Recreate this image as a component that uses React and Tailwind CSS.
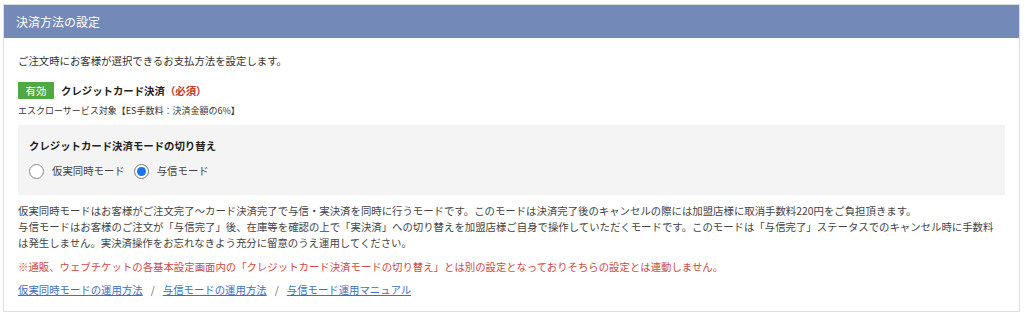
import { useState } from "react"

const FONT = { fontFamily: '"Noto Sans CJK JP", "Noto Sans", sans-serif' }

const Radio = ({ checked, label, onClick }) => (
  <label className="flex items-center cursor-pointer" onClick={onClick}>
    <span
      className={`w-[15px] h-[15px] rounded-full border bg-white flex items-center justify-center ${
        checked ? "border-[#767676]" : "border-[#8a8a8a]"
      }`}
    >
      {checked && <span className="w-[9px] h-[9px] rounded-full bg-[#1a73e8]" />}
    </span>
    <span className="ml-[8px] text-[10.4px] text-[#444]">{label}</span>
  </label>
)

const App = () => {
  const [mode, setMode] = useState("yoshin")

  return (
    <div className="pt-[4px] pl-[3px] pr-[4px]" style={FONT}>
      <div className="border border-[#dedede] bg-white h-[308px]">
        <div className="bg-[#7389b7] h-[33px] flex items-center px-[12px]">
          <h1 className="text-white text-[12px]">決済方法の設定</h1>
        </div>

        <div className="px-[14px] pt-[15px] text-[#333] text-[10.4px] leading-[16px]">
          <p>ご注文時にお客様が選択できるお支払方法を設定します。</p>

          <div className="flex items-center mt-[13px]">
            <span className="bg-[#51a843] text-white w-[36px] h-[17px] flex items-center justify-center text-[10.4px]">
              有効
            </span>
            <span className="ml-[7px] font-bold text-[#222]">クレジットカード決済</span>
            <span className="font-bold text-[#c0392b]">（必須）</span>
          </div>
          <p className="text-[9px] mt-[4px] text-[#333]">エスクローサービス対象【ES手数料：決済金額の6%】</p>

          <div className="bg-[#f4f4f4] mt-[6px] h-[70px] pl-[11px] pt-[13px]">
            <p className="font-bold text-[#222]">クレジットカード決済モードの切り替え</p>
            <div className="flex items-center gap-[9px] mt-[9px]">
              <Radio checked={mode === "kari"} label="仮実同時モード" onClick={() => setMode("kari")} />
              <Radio checked={mode === "yoshin"} label="与信モード" onClick={() => setMode("yoshin")} />
            </div>
          </div>

          <div className="mt-[8px] pr-[6px] text-[#444]">
            <p>仮実同時モードはお客様がご注文完了〜カード決済完了で与信・実決済を同時に行うモードです。このモードは決済完了後のキャンセルの際には加盟店様に取消手数料220円をご負担頂きます。</p>
            <p>与信モードはお客様のご注文が「与信完了」後、在庫等を確認の上で「実決済」への切り替えを加盟店様ご自身で操作していただくモードです。このモードは「与信完了」ステータスでのキャンセル時に手数料は発生しません。実決済操作をお忘れなきよう充分に留意のうえ運用してください。</p>
          </div>

          <p className="mt-[8px] text-[#d04a45]">※通販、ウェブチケットの各基本設定画面内の「クレジットカード決済モードの切り替え」とは別の設定となっておりそちらの設定とは連動しません。</p>

          <div className="mt-[7px] flex items-center text-[#3d6fc4]">
            <a href="#" className="underline">仮実同時モードの運用方法</a>
            <span className="mx-[8px] text-[#666]">/</span>
            <a href="#" className="underline">与信モードの運用方法</a>
            <span className="mx-[8px] text-[#666]">/</span>
            <a href="#" className="underline">与信モード運用マニュアル</a>
          </div>
        </div>
      </div>
    </div>
  )
}

export default App
